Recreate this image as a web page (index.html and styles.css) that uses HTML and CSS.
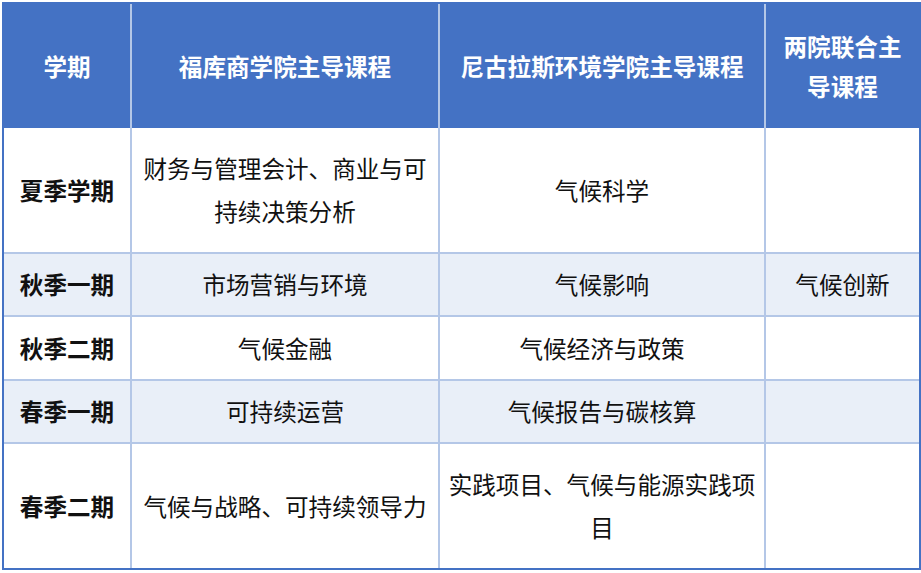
FILE: index.html
```html
<!DOCTYPE html>
<html lang="zh-CN">
<head>
<meta charset="utf-8">
<title>课程安排</title>
<link rel="stylesheet" href="styles.css">
</head>
<body>
<table class="schedule">
  <thead>
    <tr class="head-row">
      <th class="c1">学期</th>
      <th class="c2">福库商学院主导课程</th>
      <th class="c3">尼古拉斯环境学院主导课程</th>
      <th class="c4">两院联合主<br>导课程</th>
    </tr>
  </thead>
  <tbody>
    <tr class="row-tall">
      <td class="term">夏季学期</td>
      <td>财务与管理会计、商业与可<br>持续决策分析</td>
      <td>气候科学</td>
      <td></td>
    </tr>
    <tr class="row-a alt">
      <td class="term">秋季一期</td>
      <td>市场营销与环境</td>
      <td>气候影响</td>
      <td>气候创新</td>
    </tr>
    <tr class="row-b">
      <td class="term">秋季二期</td>
      <td>气候金融</td>
      <td>气候经济与政策</td>
      <td></td>
    </tr>
    <tr class="row-a alt">
      <td class="term">春季一期</td>
      <td>可持续运营</td>
      <td>气候报告与碳核算</td>
      <td></td>
    </tr>
    <tr class="row-last">
      <td class="term">春季二期</td>
      <td>气候与战略、可持续领导力</td>
      <td>实践项目、气候与能源实践项<br>目</td>
      <td></td>
    </tr>
  </tbody>
</table>
</body>
</html>
```
FILE: styles.css
```css
html, body {
  margin: 0;
  background: #ffffff;
}
body {
  padding: 2px 0 0 2px;
  font-family: "Noto Sans CJK SC", sans-serif;
}
.schedule {
  border-collapse: separate;
  border-spacing: 0;
  border: 2px solid #4472c4;
  table-layout: fixed;
  width: 919px;
}
.schedule th,
.schedule td {
  box-sizing: border-box;
  padding: 0 4px;
  text-align: center;
  vertical-align: middle;
  white-space: nowrap;
  font-size: 23.6px;
}
.schedule th {
  background: #4472c4;
  color: #ffffff;
  font-weight: 700;
  line-height: 40px;
  border-right: 2px solid #b4c7e7;
}
.schedule th.c4 { border-right: none; }
.c1 { width: 128px; }
.c2 { width: 308px; }
.c3 { width: 326px; }
.c4 { width: 153px; }
.schedule td {
  color: #111111;
  font-weight: 400;
  line-height: 43px;
  border-right: 2px solid #b4c7e7;
  border-bottom: 2px solid #b4c7e7;
}
.schedule td:last-child { border-right: none; }
.schedule .row-last td { border-bottom: none; }
.schedule td.term { font-weight: 700; }
.alt td { background: #e9eff8; }
.head-row { height: 124px; }
.row-tall { height: 126px; }
.row-a { height: 63px; }
.row-b { height: 64px; }
.row-last { height: 124px; }
```
